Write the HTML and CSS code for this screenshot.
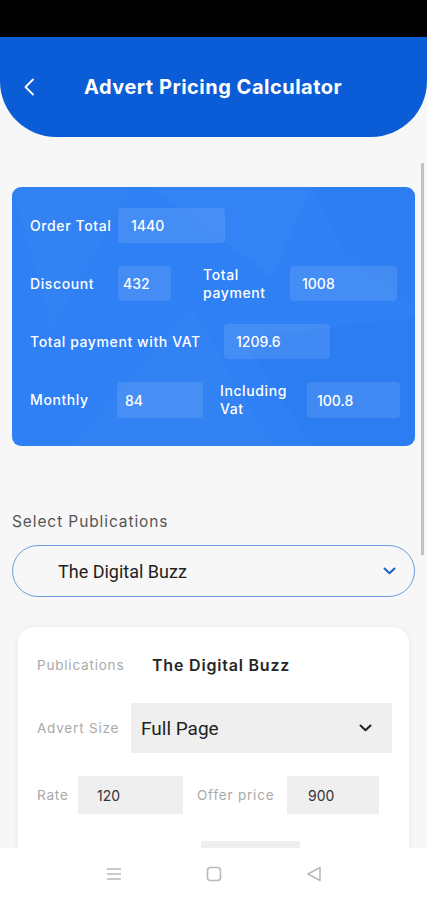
FILE: index.html
```html
<!doctype html>
<html lang="en">
  <head>
    <meta charset="utf-8">
    <meta name="viewport" content="width=device-width, initial-scale=1">
    <title>Advert Pricing Calculator</title>
    <link rel="stylesheet" href="styles.css">
  </head>
  <body>
    <div class="screen">
      <div class="status-bar"></div>

      <header class="app-header">
        <svg class="back" width="12" height="18" viewBox="0 0 12 18"><path d="M10 1.5 L2.5 9 L10 16.5" fill="none" stroke="#fff" stroke-width="1.8" stroke-linecap="round" stroke-linejoin="round"/></svg>
        <h1>Advert Pricing Calculator</h1>
      </header>

      <main class="content">
        <section class="summary">
          <!-- faint polygon pattern behind the totals -->
          <svg class="summary-bg" viewBox="0 0 403 258" preserveAspectRatio="none">
            <polygon points="0,0 120,0 40,140" fill="#ffffff" opacity="0.02"/>
            <polygon points="140,0 300,0 260,90" fill="#ffffff" opacity="0.025"/>
            <polygon points="300,0 403,0 403,120 330,60" fill="#1f6fe6" opacity="0.15"/>
            <polygon points="60,258 180,120 260,258" fill="#ffffff" opacity="0.02"/>
            <polygon points="230,150 403,130 403,258 300,258" fill="#1f6fe6" opacity="0.12"/>
          </svg>

          <div class="summary-row">
            <span class="s-label lbl-88">Order Total</span>
            <span class="s-box box-order">1440</span>
          </div>
          <div class="summary-row">
            <span class="s-label lbl-88">Discount</span>
            <span class="s-box box-discount">432</span>
            <span class="s-label lbl-second">Total payment</span>
            <span class="s-box box-total">1008</span>
          </div>
          <div class="summary-row">
            <span class="s-label lbl-vat">Total payment with VAT</span>
            <span class="s-box box-vat">1209.6</span>
          </div>
          <div class="summary-row row-tall">
            <span class="s-label lbl-87">Monthly</span>
            <span class="s-box box-monthly">84</span>
            <span class="s-label lbl-incl">Including Vat</span>
            <span class="s-box box-incl">100.8</span>
          </div>
        </section>

        <div class="section-label">Select Publications</div>
        <div class="dropdown">
          <span>The Digital Buzz</span>
          <svg width="13" height="8" viewBox="0 0 13 8"><path d="M1.5 1.5 L6.5 6.3 L11.5 1.5" fill="none" stroke="#1b5ec6" stroke-width="2" stroke-linecap="round" stroke-linejoin="round"/></svg>
        </div>

        <section class="detail-card">
          <div class="d-row">
            <span class="d-label lbl-pub">Publications</span>
            <span class="d-value">The Digital Buzz</span>
          </div>
          <div class="d-row">
            <span class="d-label lbl-size">Advert Size</span>
            <div class="d-select">
              <span>Full Page</span>
              <svg width="13" height="8" viewBox="0 0 13 8"><path d="M1.5 1.5 L6.5 6.3 L11.5 1.5" fill="none" stroke="#222" stroke-width="2" stroke-linecap="round" stroke-linejoin="round"/></svg>
            </div>
          </div>
          <div class="d-row">
            <span class="d-label lbl-rate">Rate</span>
            <span class="d-box box-rate">120</span>
            <span class="d-label lbl-offer">Offer price</span>
            <span class="d-box box-offer">900</span>
          </div>
          <div class="d-row row-last">
            <span class="d-label lbl-disc">Discount</span>
            <span class="d-box box-disc"></span>
          </div>
        </section>
      </main>

      <div class="scrollbar"></div>

      <nav class="nav-bar">
        <svg width="16" height="14" viewBox="0 0 16 14"><path d="M1 2 H15 M1 7 H15 M1 12 H15" stroke="#b9b9b9" stroke-width="1.6"/></svg>
        <svg width="16" height="16" viewBox="0 0 16 16"><rect x="1.5" y="1.5" width="13" height="13" rx="3" fill="none" stroke="#b9b9b9" stroke-width="1.6"/></svg>
        <svg width="16" height="16" viewBox="0 0 16 16"><path d="M14 1.5 L2 8 L14 14.5 Z" fill="none" stroke="#b9b9b9" stroke-width="1.6" stroke-linejoin="round"/></svg>
      </nav>
    </div>
  </body>
</html>
```

FILE: styles.css
```css
html, body {
  margin: 0;
  padding: 0;
  background: #000;
}

body {
  font-family: Inter, "Open Sans", sans-serif;
}

.screen {
  position: relative;
  width: 427px;
  height: 900px;
  overflow: hidden;
  background: #f7f7f7;
}

.status-bar {
  height: 37px;
  background: #000;
}

/* header */
.app-header {
  height: 100px;
  background: #0a5dd6;
  border-radius: 0 0 56px 56px;
  display: flex;
  align-items: center;
  padding-left: 23px;
}

.app-header .back {
  flex: none;
}

.app-header h1 {
  margin: 0 0 0 49px;
  font-size: 20px;
  font-weight: 700;
  color: #fff;
  letter-spacing: 0.5px;
}

.content {
  padding: 50px 12px 0;
}

/* blue totals card */
.summary {
  position: relative;
  background: #2f80f4;
  border-radius: 9px;
  padding: 21px 18px 28px;
  display: flex;
  flex-direction: column;
  gap: 23px;
  overflow: hidden;
}

.summary-bg {
  position: absolute;
  top: 0;
  left: 0;
  width: 100%;
  height: 100%;
}

.summary-row {
  position: relative;
  display: flex;
  align-items: center;
  height: 35px;
}

.summary-row.row-tall {
  height: 36px;
}

.s-label {
  flex: none;
  color: #fff;
  font-size: 14px;
  font-weight: 500;
  line-height: 18px;
  letter-spacing: 0.6px;
}

.lbl-88 { width: 88px; }
.lbl-87 { width: 87px; }
.lbl-vat { width: 194px; }
.lbl-second { width: 87px; margin-left: 32px; }
.lbl-incl { width: 87px; margin-left: 17px; }

.s-box {
  flex: none;
  box-sizing: border-box;
  height: 100%;
  display: flex;
  align-items: center;
  padding-left: 12px;
  background: rgba(255, 255, 255, 0.1);
  border-radius: 4px;
  color: #fff;
  font-size: 14px;
  font-weight: 500;
}

.box-order { width: 107px; padding-left: 13px; }
.box-discount { width: 53px; padding-left: 5px; }
.box-total { width: 107px; }
.box-vat { width: 106px; }
.box-monthly { width: 86px; padding-left: 8px; }
.box-incl { width: 93px; padding-left: 10px; }

/* publication picker */
.section-label {
  margin-top: 67px;
  font-size: 15.5px;
  line-height: 18px;
  color: #555;
  letter-spacing: 0.9px;
}

.dropdown {
  box-sizing: border-box;
  height: 52px;
  margin-top: 14px;
  border: 1px solid #6f9de0;
  border-radius: 26px;
  display: flex;
  align-items: center;
  justify-content: space-between;
  padding: 0 18px 0 45px;
  font-family: Roboto, sans-serif;
  font-size: 18px;
  color: #222;
}

/* white details card */
.detail-card {
  margin: 30px 6px 0;
  background: #fff;
  border-radius: 16px;
  box-shadow: 0 1px 6px rgba(0, 0, 0, 0.08);
  padding: 19px 17px 40px 19px;
  display: flex;
  flex-direction: column;
}

.d-row {
  display: flex;
  align-items: center;
  min-height: 38px;
}

.d-row + .d-row {
  margin-top: 19px;
}

.d-row:nth-child(3) {
  margin-top: 23px;
}

.d-row.row-last {
  margin-top: 27px;
}

.d-label {
  flex: none;
  font-size: 13.5px;
  color: #a9a9a9;
  letter-spacing: 0.8px;
}

.lbl-pub { width: 115px; }
.lbl-size { width: 94px; }
.lbl-rate { width: 41px; }
.lbl-offer { width: 90px; margin-left: 14px; }
.lbl-disc { width: 164px; }

.d-value {
  font-size: 16px;
  font-weight: 600;
  color: #262626;
  letter-spacing: 0.8px;
}

.d-select {
  box-sizing: border-box;
  width: 261px;
  height: 50px;
  background: #efefef;
  display: flex;
  align-items: center;
  justify-content: space-between;
  padding: 0 20px 0 10px;
  font-family: Roboto, sans-serif;
  font-size: 19px;
  color: #222;
}

.d-box {
  box-sizing: border-box;
  height: 38px;
  background: #efefef;
  display: flex;
  align-items: center;
  font-size: 14px;
  color: #333;
}

.box-rate { width: 105px; padding-left: 19px; }
.box-offer { width: 92px; padding-left: 21px; }
.box-disc { width: 99px; height: 40px; }

/* overlays */
.scrollbar {
  position: absolute;
  top: 163px;
  right: 3px;
  width: 3px;
  height: 392px;
  background: #c2c2c2;
}

.nav-bar {
  position: absolute;
  left: 0;
  right: 0;
  bottom: 0;
  height: 52px;
  background: #fff;
  display: flex;
  align-items: center;
  justify-content: center;
  gap: 84px;
}
```
